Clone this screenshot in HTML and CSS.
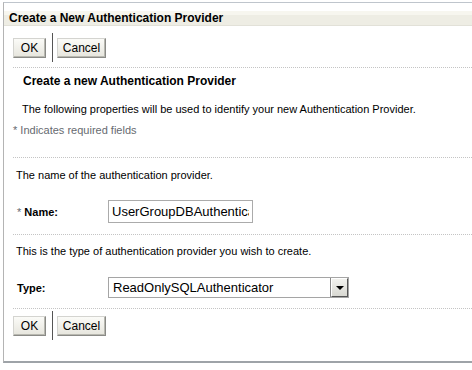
FILE: index.html
```html
<!DOCTYPE html>
<html lang="en">
<head>
    <meta charset="UTF-8">
    <title>Create a New Authentication Provider</title>
    <link rel="stylesheet" href="styles.css">
</head>
<body>
<div class="panel">
    <div class="panel-title">Create a New Authentication Provider</div>

    <!-- top buttons -->
    <div class="toolbar">
        <button type="button" class="btn btn-ok">OK</button>
        <span class="sep"></span>
        <button type="button" class="btn btn-cancel">Cancel</button>
    </div>

    <div class="section intro">
        <h3>Create a new Authentication Provider</h3>
        <p class="desc">The following properties will be used to identify your new Authentication Provider.</p>
        <p class="req">* Indicates required fields</p>
    </div>

    <div class="section name-section">
        <p class="help">The name of the authentication provider.</p>
        <div class="field">
            <label class="label"><span class="star">*</span> Name:</label>
            <input type="text" class="text-input" value="UserGroupDBAuthenticator">
        </div>
    </div>

    <div class="section type-section">
        <p class="help">This is the type of authentication provider you wish to create.</p>
        <div class="field">
            <label class="label">Type:</label>
            <div class="select-wrap">
                <select class="select">
                    <option>ReadOnlySQLAuthenticator</option>
                    <option>SQLAuthenticator</option>
                    <option>DefaultAuthenticator</option>
                </select>
                <span class="select-arrow"></span>
            </div>
        </div>
    </div>

    <!-- bottom buttons -->
    <div class="toolbar bottom">
        <button type="button" class="btn btn-ok">OK</button>
        <span class="sep"></span>
        <button type="button" class="btn btn-cancel">Cancel</button>
    </div>
</div>
</body>
</html>
```

FILE: styles.css
```css
body { margin: 0; background: #fff; font-family: "Liberation Sans", Arial, sans-serif; font-size: 11px; color: #000; }
p { margin: 0; }

.panel { margin: 2px 0 0 3px; border-top: 1px solid #bfc5cc; border-left: 1px solid #b4b4b4; border-bottom: 2px solid #9ea3a8; box-shadow: 0 1px 0 #dcdcd4; padding-top: 8px; }
.panel-title { height: 14px; line-height: 14px; padding-left: 5px; font-size: 12px; font-weight: bold; color: #000; background: linear-gradient(#f7f6ef 0, #f7f6ef 4px, #eeede4 4px); border-bottom: 1px solid #e2e1d8; }

.toolbar { display: flex; align-items: center; padding: 7px 0 5px 9px; }
.toolbar.bottom { margin-left: 9px; padding: 2px 0 21px 0; border-top: 1px dotted #c4c4c4; }
.sep { width: 1px; height: 29px; background: #555; margin: 0 4px 0 6px; }
.btn { height: 20px; padding: 0; font-family: "Liberation Sans", Arial, sans-serif; font-size: 12px; color: #000; background: linear-gradient(#fbfbf8, #e6e5dd); border: 1px solid; border-color: #d4d4d0 #8a8a86 #8a8a86 #d4d4d0; box-shadow: inset -1px -1px 0 #b8b8b0; cursor: pointer; }
.btn-ok { width: 33px; }
.btn-cancel { width: 49px; }

.section { margin-left: 9px; border-top: 1px dotted #c4c4c4; }

.intro { padding: 6px 0 20px; }
.intro h3 { margin: 0 0 14px 10px; font-size: 12px; line-height: 14px; font-weight: bold; }
.desc { margin-left: 9px; line-height: 14px; }
.req { margin-top: 7px; line-height: 14px; color: #666a70; }

.name-section { padding: 10px 0 11px; }
.type-section { padding: 9px 0 10px; }
.help { margin-left: 3px; line-height: 14px; }

.field { display: flex; align-items: center; margin-top: 18px; }
.type-section .field { margin-top: 19px; }
.label { width: 91px; padding-left: 4px; font-weight: bold; }
.star { font-weight: normal; color: #666a70; }

.text-input { box-sizing: border-box; width: 145px; height: 23px; padding: 0 3px; border: 1px solid #ababab; font-family: "Liberation Sans", Arial, sans-serif; font-size: 13px; color: #000; outline: none; }

.select-wrap { position: relative; width: 241px; height: 21px; }
.select { box-sizing: border-box; width: 241px; height: 21px; padding: 0 0 0 4px; border: 1px solid #a5a5a5; background: #fff; font-family: "Liberation Sans", Arial, sans-serif; font-size: 13px; color: #000; appearance: none; -webkit-appearance: none; border-radius: 0; outline: none; }
.select-arrow { position: absolute; right: 1px; top: 1px; width: 15px; height: 17px; background: linear-gradient(#f2f2ee, #d8d8d2); border: 1px solid; border-color: #fff #555 #555 #fff; box-shadow: -1px 0 0 #888; pointer-events: none; }
.select-arrow::after { content: ""; position: absolute; left: 4px; top: 7px; border-left: 4px solid transparent; border-right: 4px solid transparent; border-top: 4px solid #000; }
```
